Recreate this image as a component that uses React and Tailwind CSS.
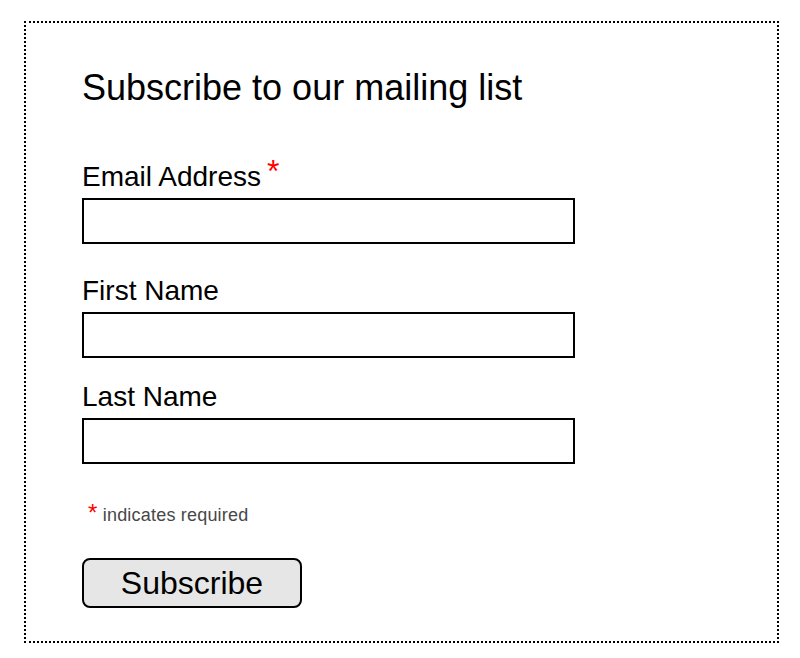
export default function App() {
  return (
    <div className="min-h-screen bg-white pt-[21px] pl-[24px] font-['Liberation_Sans',Arial,sans-serif] text-black">
      <div className="w-[755px] border-2 border-dotted border-black pl-[56px] pt-[44px] pb-[33px]">
        <h2 className="text-[36px] leading-[41px] font-normal">Subscribe to our mailing list</h2>

        {/* Email */}
        <label className="mt-[53px] mb-[5px] block text-[28px] leading-[32px]">
          Email Address
          <span className="relative -top-[4px] ml-[6px] text-[32px] leading-[0] text-[#ff0000]">*</span>
        </label>
        <input type="email" className="block h-[46px] w-[493px] border-2 border-black bg-white px-2 outline-none" />

        {/* First name */}
        <label className="mt-[31px] mb-[5px] block text-[28px] leading-[32px]">First Name</label>
        <input type="text" className="block h-[46px] w-[493px] border-2 border-black bg-white px-2 outline-none" />

        {/* Last name */}
        <label className="mt-[23px] mb-[5px] block text-[28px] leading-[32px]">Last Name</label>
        <input type="text" className="block h-[46px] w-[493px] border-2 border-black bg-white px-2 outline-none" />

        <div className="mt-[41px] pl-[6px] text-[18px] leading-[21px] tracking-[0.2px] text-[#474747]">
          <span className="text-[24px] leading-[0] text-[#ff0000]">*</span> indicates required
        </div>

        <button className="mt-[32px] block h-[50px] w-[220px] rounded-[8px] border-2 border-black bg-[#e6e6e6] text-[32px] leading-none text-black">
          Subscribe
        </button>
      </div>
    </div>
  )
}
